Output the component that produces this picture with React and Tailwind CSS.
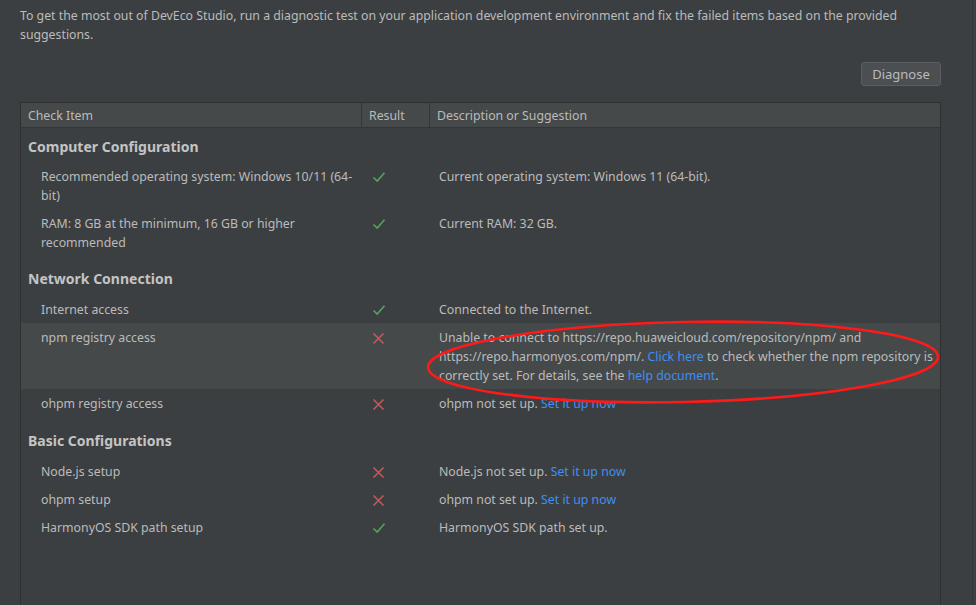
import React from "react";

const Check = () => (
  <svg width="14" height="12" viewBox="0 0 14 12" className="block">
    <path d="M1.5 6.5 L5.2 10 L12.5 1.8" fill="none" stroke="#55a35c" strokeWidth="1.6" />
  </svg>
);

const Cross = () => (
  <svg width="13" height="13" viewBox="0 0 13 13" className="block">
    <path d="M1.5 1.5 L11.5 11.5 M11.5 1.5 L1.5 11.5" fill="none" stroke="#d0535a" strokeWidth="1.6" />
  </svg>
);

const Link = ({ children }) => <span className="text-[#3d8ff5]">{children}</span>;

const Section = ({ title, first, last }) => (
  <div
    className={`pl-[7px] ${first ? "pt-[9px] pb-[5px]" : last ? "pt-[14px] pb-[6px]" : "pt-[13px] pb-[6px]"} text-[14px] leading-[20px] font-bold text-[#c4c4c4]`}
  >
    {title}
  </div>
);

const Row = ({ item, ok, children, active }) => (
  <div className={`flex py-[4.5px] leading-[19px] whitespace-nowrap ${active ? "bg-[#45494a]" : ""}`}>
    <div className="w-[341px] shrink-0 pl-[20px] pr-2">{item}</div>
    <div className="w-[68px] shrink-0 pl-[10px] pt-[4px]">{ok ? <Check /> : <Cross />}</div>
    <div className="flex-1 pl-[9px] pr-2">{children}</div>
  </div>
);

export default function App() {
  return (
    <div
      className="relative w-[976px] h-[605px] overflow-hidden bg-[#3c3f41] text-[#bbbbbb] text-[12.3px]"
      style={{ fontFamily: '"Noto Sans", "Open Sans", sans-serif' }}
    >
      <div className="absolute top-0 bottom-0 left-[972px] w-px bg-[#333537]" />
      <div className="ml-[20px] w-[921px]">
        <p className="pt-[6px] leading-[19px]">
          To get the most out of DevEco Studio, run a diagnostic test on your application development environment and fix the failed items based on the provided suggestions.
        </p>
        <div className="flex justify-end mt-[18px]">
          <button className="h-[24px] w-[80px] rounded-[3px] border border-[#5b5e60] bg-[#4b4f51] text-[13px] text-[#bbbbbb] leading-none">
            Diagnose
          </button>
        </div>
        <div className="mt-[16px] h-[520px] border border-[#2e3031] border-b-0">
          <div className="flex h-[25px] bg-[#45494a] border-b border-[#333537] leading-[25px]">
            <div className="w-[341px] shrink-0 pl-[7px] border-r border-[#333537]">Check Item</div>
            <div className="w-[68px] shrink-0 pl-[7px] border-r border-[#333537]">Result</div>
            <div className="flex-1 pl-[7px]">Description or Suggestion</div>
          </div>

          <Section title="Computer Configuration" first />
          <Row item={<>Recommended operating system: Windows 10/11 (64-<br />bit)</>} ok>
            Current operating system: Windows 11 (64-bit).
          </Row>
          <Row item={<>RAM: 8 GB at the minimum, 16 GB or higher<br />recommended</>} ok>
            Current RAM: 32 GB.
          </Row>

          <Section title="Network Connection" />
          <Row item="Internet access" ok>
            Connected to the Internet.
          </Row>
          <Row item="npm registry access" active>
            Unable to connect to https://repo.huaweicloud.com/repository/npm/ and
            <br />
            https://repo.harmonyos.com/npm/. <Link>Click here</Link> to check whether the npm repository is
            <br />
            correctly set. For details, see the <Link>help document</Link>.
          </Row>
          <Row item="ohpm registry access">
            ohpm not set up. <Link>Set it up now</Link>
          </Row>

          <Section title="Basic Configurations" last />
          <Row item="Node.js setup">
            Node.js not set up. <Link>Set it up now</Link>
          </Row>
          <Row item="ohpm setup">
            ohpm not set up. <Link>Set it up now</Link>
          </Row>
          <Row item="HarmonyOS SDK path setup" ok>
            HarmonyOS SDK path set up.
          </Row>
        </div>
      </div>

      <svg className="absolute left-0 top-0 pointer-events-none" width="976" height="605">
        <ellipse
          cx="683"
          cy="362"
          rx="255"
          ry="40"
          transform="rotate(-1.2 683 362)"
          fill="none"
          stroke="#ff1a1a"
          strokeWidth="2.6"
        />
      </svg>
    </div>
  );
}
